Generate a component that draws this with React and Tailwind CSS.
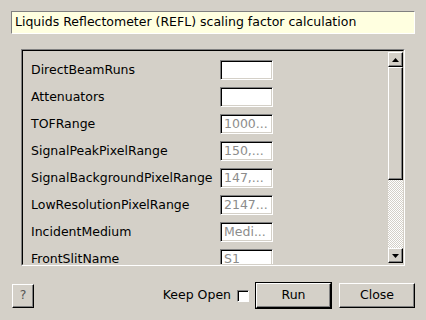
const rows = [
  { label: "DirectBeamRuns", value: "" },
  { label: "Attenuators", value: "" },
  { label: "TOFRange", value: "1000..." },
  { label: "SignalPeakPixelRange", value: "150,..." },
  { label: "SignalBackgroundPixelRange", value: "147,..." },
  { label: "LowResolutionPixelRange", value: "2147..." },
  { label: "IncidentMedium", value: "Medi..." },
  { label: "FrontSlitName", value: "S1" },
];

const raised =
  "border border-t-white border-l-white border-b-black border-r-black shadow-[inset_-1px_-1px_0_#808080]";

const App = () => {
  return (
    <div className="w-[426px] h-[320px] bg-[#d4d0c8] pt-[11px] px-[11px] font-['DejaVu_Sans',sans-serif] text-[12.5px] text-black overflow-hidden">
      {/* Description */}
      <div className="w-[404px] h-[23px] bg-[#ffffe0] border border-t-[#808080] border-l-[#808080] border-b-white border-r-white flex items-center pl-[3px]">
        Liquids Reflectometer (REFL) scaling factor calculation
      </div>

      {/* Property list */}
      <div className="mt-[15px] ml-[10px] w-[384px] h-[217px] border border-t-[#808080] border-l-[#808080] border-b-white border-r-white">
        <div className="h-full flex border border-t-black border-l-black border-b-[#d4d0c8] border-r-[#d4d0c8]">
          <div className="flex-1 overflow-hidden pt-[9px] pl-[8px]">
            <div className="flex flex-col gap-[7px]">
              {rows.map((row, idx) => (
                <div key={`row-${idx}`} className="flex items-center h-[20px]">
                  <div className="w-[189px] shrink-0 whitespace-nowrap">{row.label}</div>
                  <div className="w-[53px] h-[20px] shrink-0 bg-white border border-t-[#808080] border-l-[#808080] border-b-white border-r-white shadow-[inset_1px_1px_0_#000,inset_-1px_-1px_0_#d4d0c8] flex items-center pl-[3px] text-[#8c8c8c] overflow-hidden whitespace-nowrap">
                    {row.value}
                  </div>
                </div>
              ))}
            </div>
          </div>

          {/* Scrollbar */}
          <div className="w-[15px] flex flex-col pt-[1px] pb-[1px]">
            <div className={`h-[15px] bg-[#d4d0c8] flex items-center justify-center ${raised}`}>
              <svg width="7" height="4" viewBox="0 0 7 4">
                <polygon points="3.5,0 7,4 0,4" fill="#000" />
              </svg>
            </div>
            <div className={`h-[113px] bg-[#d4d0c8] ${raised}`} />
            <div className="flex-1 bg-[repeating-conic-gradient(#ffffff_0_25%,#d4d0c8_0_50%)] bg-[length:2px_2px]" />
            <div className={`h-[15px] bg-[#d4d0c8] flex items-center justify-center ${raised}`}>
              <svg width="7" height="4" viewBox="0 0 7 4">
                <polygon points="0,0 7,0 3.5,4" fill="#000" />
              </svg>
            </div>
          </div>
        </div>
      </div>

      {/* Buttons */}
      <div className="mt-[16px] flex items-center h-[27px]">
        <button className={`ml-[1px] w-[22px] h-[24px] bg-[#d4d0c8] flex items-center justify-center text-[#555] ${raised}`}>
          ?
        </button>
        <div className="flex-1" />
        <span className="mr-[6px]">Keep Open</span>
        <div className="w-[12px] h-[12px] bg-white border border-t-[#808080] border-l-[#808080] border-b-white border-r-white shadow-[inset_1px_1px_0_#000]" />
        <button className="ml-[6px] w-[77px] h-[27px] border border-black bg-[#d4d0c8]">
          <div className={`w-full h-full flex items-center justify-center ${raised}`}>Run</div>
        </button>
        <button className={`ml-[7px] w-[76px] h-[25px] bg-[#d4d0c8] flex items-center justify-center ${raised}`}>
          Close
        </button>
      </div>
    </div>
  );
};

export default App;
